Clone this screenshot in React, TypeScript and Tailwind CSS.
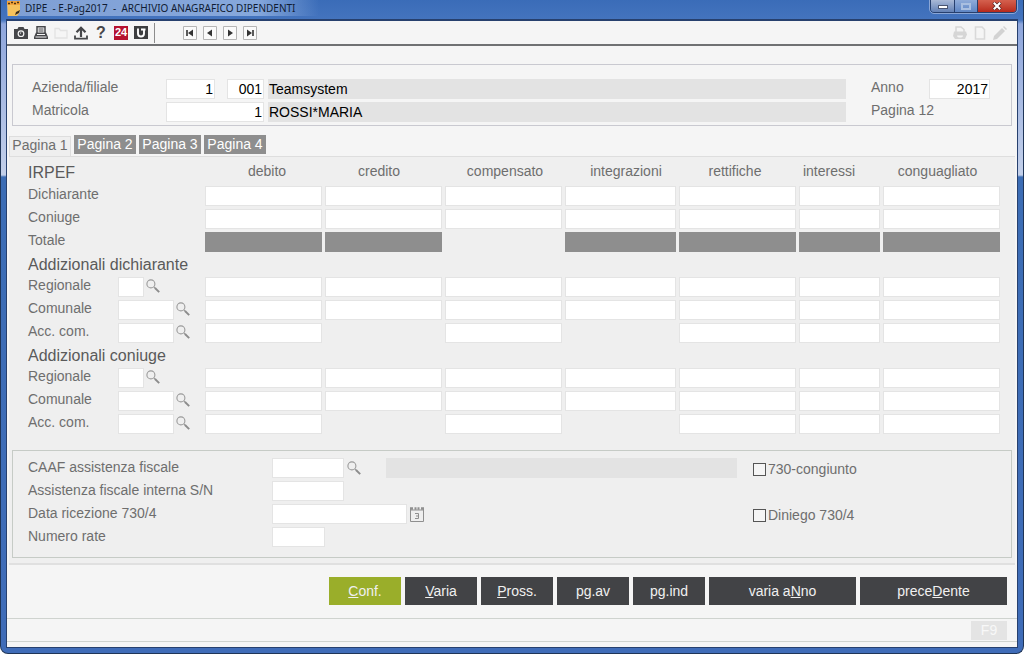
import type { ReactNode } from "react";
import clsx from "clsx";

type FieldState = "input" | "total" | "none";

interface Column {
    name: string;
    width: string;
    head: string;
}

interface Row {
    label: string;
    code?: "short" | "long";
    cells: FieldState[];
}

interface Section {
    title: string;
    rows: Row[];
}

const COLUMNS: Column[] = [
    { name: "debito", width: "w-[120px]", head: "pl-1" },
    { name: "credito", width: "w-[120px]", head: "pr-3" },
    { name: "compensato", width: "w-[120px]", head: "pl-0" },
    { name: "integrazioni", width: "w-[114px]", head: "pl-2" },
    { name: "rettifiche", width: "w-[120px]", head: "pr-2" },
    { name: "interessi", width: "w-[84px]", head: "pr-6" },
    { name: "conguagliato", width: "w-[117px]", head: "pr-2" },
];

const ALL: FieldState[] = ["input", "input", "input", "input", "input", "input", "input"];
const TOTALS: FieldState[] = ["total", "total", "none", "total", "total", "total", "total"];
const PARTIAL: FieldState[] = ["input", "none", "input", "none", "input", "input", "input"];

const ADDIZIONALI: Row[] = [
    { label: "Regionale", code: "short", cells: ALL },
    { label: "Comunale", code: "long", cells: ALL },
    { label: "Acc. com.", code: "long", cells: PARTIAL },
];

const SECTIONS: Section[] = [
    {
        title: "IRPEF",
        rows: [
            { label: "Dichiarante", cells: ALL },
            { label: "Coniuge", cells: ALL },
            { label: "Totale", cells: TOTALS },
        ],
    },
    { title: "Addizionali dichiarante", rows: ADDIZIONALI },
    { title: "Addizionali coniuge", rows: ADDIZIONALI },
];

const FIELD = "block h-5 border border-[#e4e4e4] bg-white px-px text-black outline-none";
const READOUT = "block h-5 min-w-0 bg-[#e3e3e3] px-px text-black outline-none";

function SearchIcon() {
    return (
        <svg viewBox="0 0 14 14" className="size-3.5" fill="none">
            <circle cx="4.9" cy="4.9" r="4" stroke="#9a9a9a" strokeWidth="1.1" />
            <path d="M8 8l1.3 1.3" stroke="#9a9a9a" strokeWidth="1.2" />
            <path d="M9 9l4.2 4.2" stroke="#8c8c8c" strokeWidth="1.900" />
        </svg>
    );
}

function CalendarIcon() {
    return (
        <svg viewBox="0 0 14 15" className="h-[15px] w-3.5" fill="none">
            <path d="M.5 2v12.5h13V2" stroke="#8f8f8f" />
            <path d="M0 3h14" stroke="#8f8f8f" />
            <path d="M0 1.500h3M4.500 1.500h2M7.500 1.500h2M11 1.500h3" stroke="#8f8f8f" strokeWidth="2.400" />
            <path d="M5 6.500h3.500v5H5M6 9h2.500" stroke="#8f8f8f" />
        </svg>
    );
}

function ToolButton({ label, children }: { label: string; children: ReactNode }) {
    return (
        <button type="button" aria-label={label} className="flex size-3.5 items-center justify-center">
            <svg viewBox="0 0 14 14" className="size-3.5" fill="none">
                {children}
            </svg>
        </button>
    );
}

function TitleBar() {
    return (
        <header className="flex h-5 justify-between text-[10px]">
            <div className="flex h-4 items-center gap-1 bg-linear-to-r from-[#7f9fd4] from-0% via-[#86a8dc] via-80% to-transparent pr-6">
                <svg viewBox="0 0 14 15" className="h-[15px] w-3.5" fill="none">
                    <path d="M0 0h13v11l-3 4H1z" fill="#f6c25c" />
                    <path d="M0 0h13v4H0z" fill="#f3a33c" />
                    <path d="M1 2.500h2M4 1.500h2M7 2.500h2M10 1.500h2" stroke="#4b3412" strokeWidth="1.300" />
                    <path d="M8 14l1-3 4-2-1 3z" fill="#3a2c1c" />
                </svg>
                <h1 className="font-['Noto_Sans','Open_Sans',sans-serif] whitespace-pre text-[#101c33]">
                    {"DIPE  - E-Pag2017  -  ARCHIVIO ANAGRAFICO DIPENDENTI"}
                </h1>
            </div>
            <div className="flex h-[13px] overflow-hidden rounded-b border border-t-0 border-[#27406e] outline outline-[#8aa6d6]">
                <button type="button" aria-label="Riduci" className="flex w-6 items-center justify-center border-r border-[#27406e] bg-linear-to-b from-[#a9b9d6] to-[#6482b6]">
                    <span className="mt-0.5 h-1 w-2.5 border border-[#4a5570] bg-white" />
                </button>
                <button type="button" aria-label="Ingrandisci" className="flex w-[23px] items-center justify-center border-r border-[#27406e] bg-linear-to-b from-[#8fabd8] to-[#5f86c4]">
                    <span className="h-[7px] w-2.5 border-2 border-[#a9bfe0]" />
                </button>
                <button type="button" aria-label="Chiudi" className="flex w-[38px] items-center justify-center bg-linear-to-b from-[#d4604e] to-[#b8281a]">
                    <svg viewBox="0 0 10 8" className="h-2 w-2.5">
                        <path d="M1.500 .5l7 7M8.500 .5l-7 7" stroke="#4c2020" strokeWidth="3.400" />
                        <path d="M1.800 .8l6.400 6.400M8.200 .8L1.800 7.200" stroke="#fff" strokeWidth="2.200" />
                    </svg>
                </button>
            </div>
        </header>
    );
}

function Toolbar() {
    return (
        <div className="flex h-[26px] items-center border-t border-b-2 border-t-[#27406e] border-b-[#707173] bg-[#f5f5f5] pr-2.5 pl-[7px]">
            <div className="flex h-5 items-center gap-1.5 border-r border-[#8c8c8c] pr-1.5">
                <ToolButton label="Cattura">
                    <path d="M0 3h3.500l1-2h5l1 2H14v10H0z" fill="#46474a" />
                    <circle cx="7" cy="7.700" r="3.400" fill="#f5f5f5" />
                    <circle cx="7" cy="7.700" r="2.200" fill="#46474a" />
                    <path d="M6 7.500l1.200-1" stroke="#f5f5f5" />
                </ToolButton>
                <ToolButton label="Stampa">
                    <path d="M3 7V.8h8V7" stroke="#46474a" strokeWidth="1.500" />
                    <path d="M4.500 3h5M4.500 5h5" stroke="#46474a" />
                    <path d="M2 6.500h10l2 4.500V13H0v-2z" fill="#46474a" />
                    <path d="M3 8.500h8M1.500 11h11" stroke="#f5f5f5" />
                </ToolButton>
                <ToolButton label="Apri">
                    <path d="M1 12V2.500h4l1.500 2H13V12z" stroke="#e2e2e2" strokeWidth="1.300" />
                </ToolButton>
                <ToolButton label="Esporta">
                    <path d="M7 11V3M2.500 6.200L7 1.800l4.500 4.400" stroke="#46474a" strokeWidth="2.200" />
                    <path d="M1 9.500v3.200h12V9.500" stroke="#46474a" strokeWidth="1.800" />
                </ToolButton>
                <button type="button" className="flex size-3.5 items-center justify-center text-base font-bold text-[#46474a]">?</button>
                <button type="button" className="flex size-3.5 items-center justify-center bg-[#b5122f] text-[11px] font-bold text-white">24</button>
                <ToolButton label="Teamsystem">
                    <path d="M0 0h14v13H0z" fill="#3d3e40" />
                    <path d="M4 2.500v5c0 2 1 3 3 3s3-1 3-3V3.500M7 3.500h4.500" stroke="#fff" strokeWidth="1.900" />
                </ToolButton>
            </div>
            <div className="ml-7 flex gap-1.5">
                <ToolButton label="Primo">
                    <path d="M.5 .5h13v13H.5z" fill="#fafafa" stroke="#b5b5b5" />
                    <path d="M4 4v6" stroke="#333" strokeWidth="1.600" />
                    <path d="M10 3.500v7L5 7z" fill="#333" />
                </ToolButton>
                <ToolButton label="Precedente">
                    <path d="M.5 .5h13v13H.5z" fill="#fafafa" stroke="#b5b5b5" />
                    <path d="M9 3.500v7L4 7z" fill="#333" />
                </ToolButton>
                <ToolButton label="Successivo">
                    <path d="M.5 .5h13v13H.5z" fill="#fafafa" stroke="#b5b5b5" />
                    <path d="M5 3.500v7L10 7z" fill="#333" />
                </ToolButton>
                <ToolButton label="Ultimo">
                    <path d="M.5 .5h13v13H.5z" fill="#fafafa" stroke="#b5b5b5" />
                    <path d="M10 4v6" stroke="#333" strokeWidth="1.600" />
                    <path d="M4 3.500v7L9 7z" fill="#333" />
                </ToolButton>
            </div>
            <div className="ml-auto flex gap-1.5">
                <ToolButton label="Stampa pagina">
                    <path d="M3 6V1h5l3 2.500V6" stroke="#d6d6d6" strokeWidth="1.500" />
                    <path d="M1 5.500h12l1 3-2 4.500H2L0 10z" fill="#d6d6d6" />
                    <path d="M4 9.500a3 2 0 0 0 6 0z" fill="#f5f5f5" />
                </ToolButton>
                <ToolButton label="Nuovo">
                    <path d="M2.500 1H9l2.500 2.500V13h-9z" stroke="#d9d9d9" strokeWidth="1.600" />
                </ToolButton>
                <ToolButton label="Modifica">
                    <path d="M0 14l1-4 8-8 3 3-8 8zM10 1l1-1 3 3-1 1z" fill="#d2d2d2" />
                </ToolButton>
            </div>
        </div>
    );
}

function CompanyBox() {
    return (
        <section className="mx-[5px] mt-[18px] flex h-[62px] justify-between border border-[#c9c9d0] pt-3.5 pr-[21px] pl-[19px]">
            <div className="flex flex-1 flex-col gap-[3px]">
                <div className="flex">
                    <label htmlFor="azienda" className="w-[134px] leading-4">Azienda/filiale</label>
                    <input id="azienda" defaultValue="1" className={clsx(FIELD, "w-[49px] text-right")} />
                    <input aria-label="Filiale" defaultValue="001" className={clsx(FIELD, "ml-3 w-[37px] text-right")} />
                    <input aria-label="Ragione sociale" readOnly value="Teamsystem" className={clsx(READOUT, "ml-1 flex-1")} />
                </div>
                <div className="flex">
                    <label htmlFor="matricola" className="w-[134px] leading-4">Matricola</label>
                    <input id="matricola" defaultValue="1" className={clsx(FIELD, "w-[98px] text-right")} />
                    <input aria-label="Nominativo" readOnly value="ROSSI*MARIA" className={clsx(READOUT, "ml-1 flex-1")} />
                </div>
            </div>
            <div className="ml-[25px] flex flex-col gap-[3px]">
                <div className="flex">
                    <label htmlFor="anno" className="w-[58px] leading-4">Anno</label>
                    <input id="anno" defaultValue="2017" className={clsx(FIELD, "w-[61px] text-right")} />
                </div>
                <p className="leading-4">Pagina 12</p>
            </div>
        </section>
    );
}

function PageTabs() {
    return (
        <nav role="tablist" className="mt-[9px] flex h-[21px] gap-[3px] pl-0.5">
            <button type="button" role="tab" aria-selected="true" className="mt-px -mb-px w-[62px] border border-b-0 border-[#dedede] bg-[#efefef] pb-1 leading-4">
                Pagina 1
            </button>
            {["Pagina 2", "Pagina 3", "Pagina 4"].map((tab) => (
                <button key={tab} type="button" role="tab" aria-selected="false" className="h-[19px] w-[62px] bg-[#8e8e8e] pb-0.5 leading-4 text-white">
                    {tab}
                </button>
            ))}
        </nav>
    );
}

function Cell({ state, label }: { state: FieldState; label: string }) {
    if (state === "none") return null;
    return (
        <input
            aria-label={label}
            readOnly={state === "total"}
            className={clsx(
                "mt-px block h-5 w-full border px-0.5 text-right outline-none",
                state === "total" ? "border-[#8e8e8e] bg-[#8e8e8e] text-white" : "border-[#e4e4e4] bg-white text-black",
            )}
        />
    );
}

function AmountsTable() {
    return (
        <table className="w-full table-fixed border-collapse">
            <colgroup>
                <col className="w-[177px]" />
                {COLUMNS.map((col) => <col key={col.name} className={col.width} />)}
            </colgroup>
            {SECTIONS.map((section, s) => (
                <tbody key={section.title}>
                    <tr className={s === 0 ? "h-7" : "h-[22px]"}>
                        <th scope="row" className={clsx("p-0 text-left text-base leading-5 font-normal whitespace-nowrap text-[#5a5a5a]", s === 0 && "pt-1")}>
                            {section.title}
                        </th>
                        {s === 0 && COLUMNS.map((col) => (
                            <th key={col.name} scope="col" className={clsx("py-0 text-center leading-4 font-normal", col.head)}>
                                {col.name}
                            </th>
                        ))}
                    </tr>
                    {section.rows.map((row) => (
                        <tr key={row.label} className="h-[23px] align-top">
                            <th scope="row" className="p-0 font-normal">
                                <div className="flex">
                                    <label htmlFor={row.code && `code-${s}-${row.label}`} className="w-[90px] text-left leading-[18px]">
                                        {row.label}
                                    </label>
                                    {row.code && (
                                        <>
                                            <input
                                                id={`code-${s}-${row.label}`}
                                                className={clsx(FIELD, "mt-px", row.code === "short" ? "w-[26px]" : "w-14")}
                                            />
                                            <button type="button" aria-label={`Cerca ${row.label}`} className="ml-0.5 h-5">
                                                <SearchIcon />
                                            </button>
                                        </>
                                    )}
                                </div>
                            </th>
                            {row.cells.map((state, i) => (
                                <td key={COLUMNS[i].name} className={clsx("p-0", i < COLUMNS.length - 1 && "pr-[3px]")}>
                                    <Cell state={state} label={`${section.title} ${row.label} ${COLUMNS[i].name}`} />
                                </td>
                            ))}
                        </tr>
                    ))}
                </tbody>
            ))}
        </table>
    );
}

function CheckOption({ id, label }: { id: string; label: string }) {
    return (
        <div className="flex h-5 items-center gap-0.5">
            <input id={id} type="checkbox" className="size-[13px] appearance-none border border-[#555] bg-[#f5f5f5] checked:bg-[#555]" />
            <label htmlFor={id}>{label}</label>
        </div>
    );
}

function AssistanceBox() {
    return (
        <section className="mx-[3px] mt-3.5 flex h-[108px] border border-[#c6cbc6] pt-[7px] pl-[15px]">
            <div className="flex flex-1 flex-col gap-[3px]">
                <div className="flex">
                    <label htmlFor="caaf" className="w-[244px] leading-[18px]">CAAF assistenza fiscale</label>
                    <input id="caaf" className={clsx(FIELD, "w-[72px]")} />
                    <button type="button" aria-label="Cerca CAAF" className="ml-[3px] h-5">
                        <SearchIcon />
                    </button>
                    <input aria-label="Descrizione CAAF" readOnly className={clsx(READOUT, "ml-[25px] flex-1")} />
                </div>
                <div className="flex">
                    <label htmlFor="interna" className="w-[244px] leading-[18px]">Assistenza fiscale interna S/N</label>
                    <input id="interna" className={clsx(FIELD, "w-[72px]")} />
                </div>
                <div className="flex">
                    <label htmlFor="ricezione" className="w-[244px] leading-[18px]">Data ricezione 730/4</label>
                    <input id="ricezione" className={clsx(FIELD, "w-[135px]")} />
                    <button type="button" aria-label="Calendario" className="ml-[3px] h-5">
                        <CalendarIcon />
                    </button>
                </div>
                <div className="flex">
                    <label htmlFor="rate" className="w-[244px] leading-[18px]">Numero rate</label>
                    <input id="rate" className={clsx(FIELD, "w-[53px]")} />
                </div>
            </div>
            <div className="ml-4 flex w-[258px] flex-col gap-[26px] pt-px">
                <CheckOption id="congiunto" label="730-congiunto" />
                <CheckOption id="diniego" label="Diniego 730/4" />
            </div>
        </section>
    );
}

function ActionButton({ className, children }: { className: string; children: ReactNode }) {
    return (
        <button type="button" className={clsx("h-7 text-[#f0f0f0]", className)}>
            {children}
        </button>
    );
}

function Footer() {
    return (
        <footer>
            <div className="flex h-[53px] justify-end gap-1 pt-3 pr-2.5">
                <ActionButton className="w-[72px] bg-[#9aae2a]"><u>C</u>onf.</ActionButton>
                <ActionButton className="w-[72px] bg-[#424346]"><u>V</u>aria</ActionButton>
                <ActionButton className="w-[72px] bg-[#424346]"><u>P</u>ross.</ActionButton>
                <ActionButton className="w-[72px] bg-[#424346]">pg.av</ActionButton>
                <ActionButton className="w-[72px] bg-[#424346]">pg.ind</ActionButton>
                <ActionButton className="w-[147px] bg-[#424346]">varia a<u>N</u>no</ActionButton>
                <ActionButton className="w-[147px] bg-[#424346]">prece<u>D</u>ente</ActionButton>
            </div>
            <div className="mb-[5px] flex h-6 items-center justify-end border-y border-[#cfd3cf] pr-2.5">
                <button type="button" disabled className="h-[19px] w-9 bg-[#e4e4e4] leading-4 text-[#f8f8f8]">F9</button>
            </div>
        </footer>
    );
}

export default function App() {
    return (
        <div className="flex min-h-screen flex-col rounded-b-lg border border-t-0 border-[#1f3557] bg-[linear-gradient(to_bottom,#3a6cb8_0px,#4474be_20px,#8ea6dc_24px,#c3d0ea_175px,#3c6db5_177px,#3f6cb8_100%)] px-1.5 pb-1.5 font-['Liberation_Sans',Arial,sans-serif] text-sm text-[#6e6e6e]">
            <TitleBar />
            <main className="flex flex-1 flex-col bg-[#f5f5f5] outline outline-[#27406e]">
                <Toolbar />
                <CompanyBox />
                <PageTabs />
                <div className="mx-0.5 flex-1 border-t border-b-2 border-t-[#dedede] border-b-[#e0e0e0] bg-[#efefef]">
                    <div className="pr-[15px] pl-[19px]">
                        <AmountsTable />
                    </div>
                    <AssistanceBox />
                </div>
                <Footer />
            </main>
        </div>
    );
}
